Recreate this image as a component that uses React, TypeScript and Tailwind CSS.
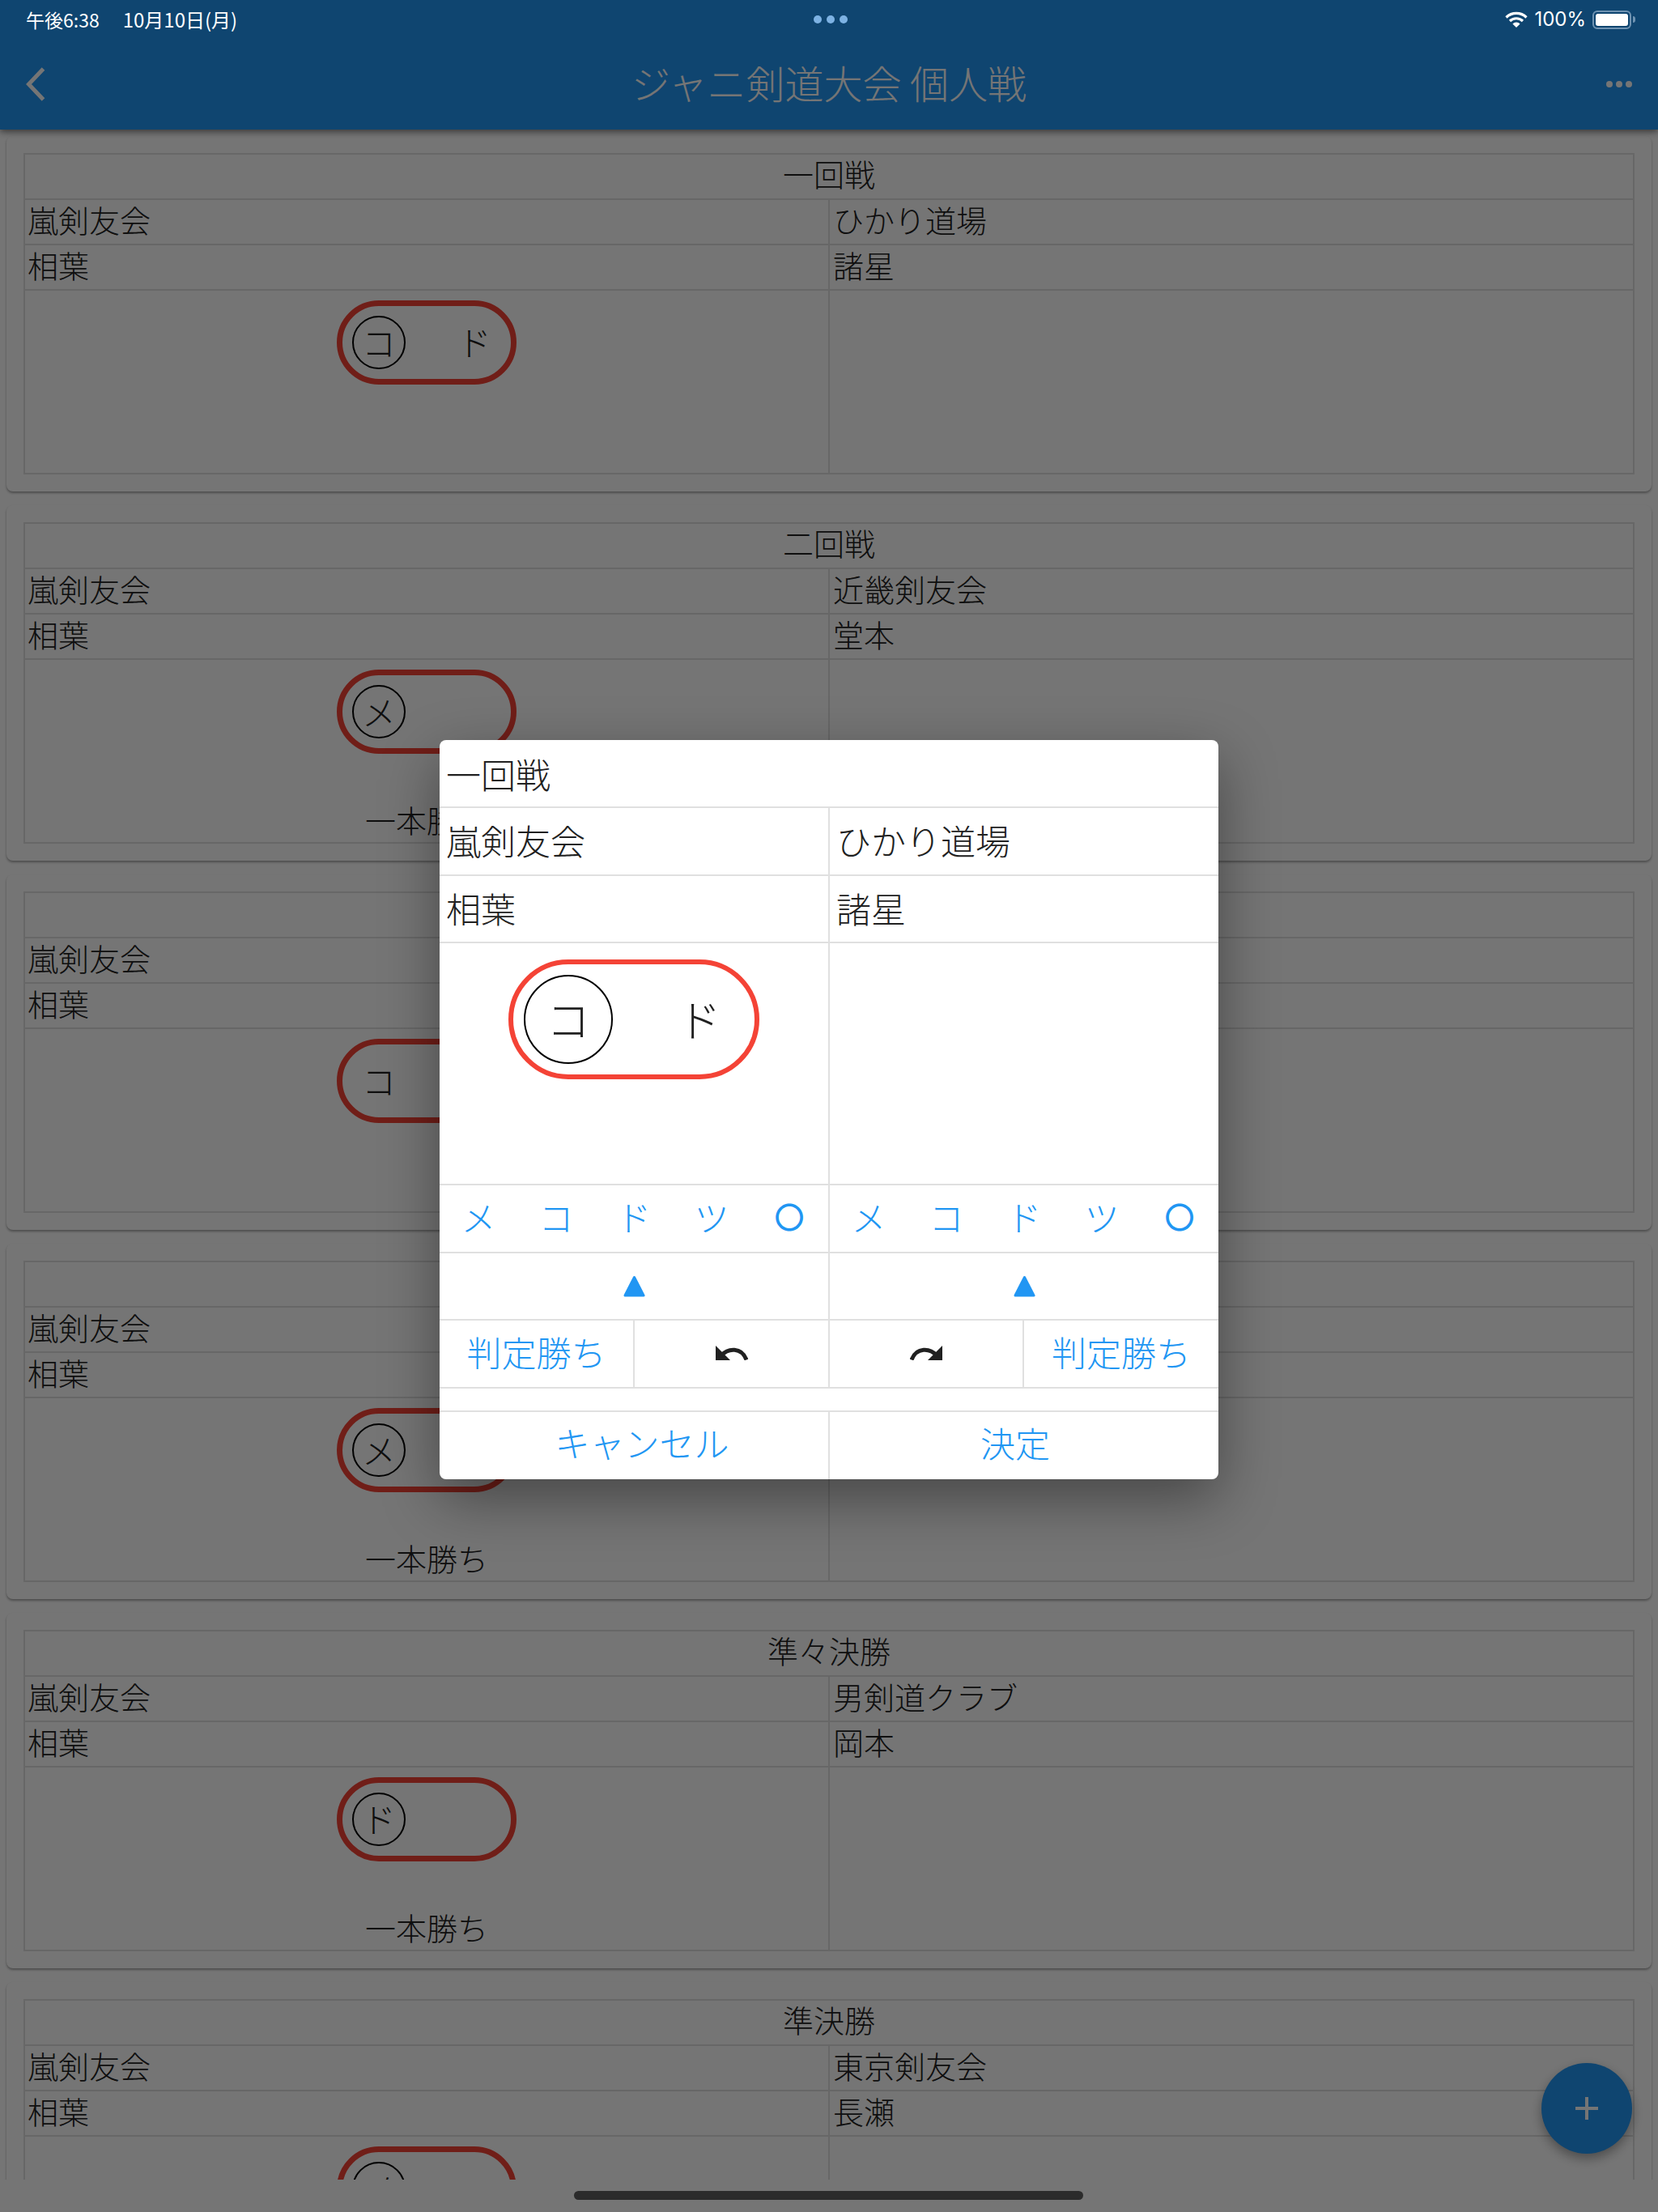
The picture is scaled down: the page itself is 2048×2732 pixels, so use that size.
const FONT = 'font-["Noto_Sans_CJK_JP","Liberation_Sans",sans-serif]';

interface Match {
    title: string;
    leftTeam: string;
    rightTeam: string;
    leftName: string;
    rightName: string;
    points: { label: string; circled: boolean }[];
    result?: string;
}

const matches: Match[] = [
    {
        title: '一回戦',
        leftTeam: '嵐剣友会',
        rightTeam: 'ひかり道場',
        leftName: '相葉',
        rightName: '諸星',
        points: [
            { label: 'コ', circled: true },
            { label: 'ド', circled: false },
        ],
    },
    {
        title: '二回戦',
        leftTeam: '嵐剣友会',
        rightTeam: '近畿剣友会',
        leftName: '相葉',
        rightName: '堂本',
        points: [{ label: 'メ', circled: true }],
        result: '一本勝ち',
    },
    {
        title: '三回戦',
        leftTeam: '嵐剣友会',
        rightTeam: '',
        leftName: '相葉',
        rightName: '',
        points: [{ label: 'コ', circled: false }],
    },
    {
        title: '四回戦',
        leftTeam: '嵐剣友会',
        rightTeam: '',
        leftName: '相葉',
        rightName: '',
        points: [{ label: 'メ', circled: true }],
        result: '一本勝ち',
    },
    {
        title: '準々決勝',
        leftTeam: '嵐剣友会',
        rightTeam: '男剣道クラブ',
        leftName: '相葉',
        rightName: '岡本',
        points: [{ label: 'ド', circled: true }],
        result: '一本勝ち',
    },
    {
        title: '準決勝',
        leftTeam: '嵐剣友会',
        rightTeam: '東京剣友会',
        leftName: '相葉',
        rightName: '長瀬',
        points: [{ label: 'メ', circled: true }],
        result: '一本勝ち',
    },
];

function SmallPill({ points }: { points: Match['points'] }) {
    return (
        <div className="flex w-[222px] h-[104px] shrink-0 items-center justify-between rounded-full border-[7px] border-[#f44336] pl-[12px] pr-[12px]">
            {points.map((point) => (
                <div
                    key={point.label}
                    className={`flex w-[66px] h-[66px] items-center justify-center rounded-full pb-[3px] text-[42px] ${
                        point.circled ? 'border-2 border-black' : ''
                    }`}>
                    {point.label}
                </div>
            ))}
        </div>
    );
}

function MatchCard({ match }: { match: Match }) {
    return (
        <div className="mx-2 mb-[17px] rounded-lg bg-white p-[21px] shadow-[0_2px_3px_rgba(0,0,0,0.35)]">
            <div className="border-2 border-[#e0e0e0] text-[38px] leading-[46px] text-[#212121]">
                <div className="flex h-[56px] items-center justify-center border-b-2 border-[#e0e0e0] pb-[8px]">
                    {match.title}
                </div>
                <div className="grid h-[56px] grid-cols-[994px_1fr] border-b-2 border-[#e0e0e0]">
                    <div className="flex items-center border-r-2 border-[#e0e0e0] pb-[7px] pl-[3px]">{match.leftTeam}</div>
                    <div className="flex items-center pb-[7px] pl-[4px]">{match.rightTeam}</div>
                </div>
                <div className="grid h-[56px] grid-cols-[994px_1fr] border-b-2 border-[#e0e0e0]">
                    <div className="flex items-center border-r-2 border-[#e0e0e0] pb-[7px] pl-[3px]">{match.leftName}</div>
                    <div className="flex items-center pb-[7px] pl-[4px]">{match.rightName}</div>
                </div>
                <div className="grid h-[225px] grid-cols-[994px_1fr]">
                    <div className="flex flex-col items-center justify-between border-r-2 border-[#e0e0e0] pt-3">
                        <SmallPill points={match.points} />
                        {match.result && <div className="pb-[5px]">{match.result}</div>}
                    </div>
                    <div />
                </div>
            </div>
        </div>
    );
}

function BackChevron() {
    return (
        <svg width="24" height="42" viewBox="0 0 24 42" fill="none" stroke="#ffffff" strokeWidth="5">
            <path d="M21.5 2 L3.5 21 L21.5 40" />
        </svg>
    );
}

function Wifi() {
    return (
        <svg width="28" height="20" viewBox="0 0 28 20" fill="none" stroke="#ffffff" strokeWidth="3.2">
            <path d="M1.5 7.5 A18 18 0 0 1 26.5 7.5" />
            <path d="M6 12 A11.5 11.5 0 0 1 22 12" />
            <path d="M14 20 L9.4 15.4 A6.5 6.5 0 0 1 18.6 15.4 Z" fill="#ffffff" stroke="none" />
        </svg>
    );
}

function Battery() {
    return (
        <div className="flex items-center gap-[2px]">
            <div className="flex h-[23px] w-[48px] items-center justify-center rounded-[6px] border-2 border-[#6f93b2]">
                <div className="h-[15px] w-[40px] rounded-[3px] bg-white" />
            </div>
            <div className="h-[8px] w-[3px] rounded-r-full bg-[#6f93b2]" />
        </div>
    );
}

function Triangle() {
    return (
        <svg width="27" height="27" viewBox="0 0 27 27" fill="#2196f3" stroke="#2196f3" strokeWidth="3" strokeLinejoin="round">
            <path d="M13.5 2.5 L25 25 H2 Z" />
        </svg>
    );
}

function Undo({ flip }: { flip?: boolean }) {
    return (
        <svg
            width="40"
            height="18"
            viewBox="0 0 40 18"
            className={flip ? '-scale-x-100' : ''}
            fill="#212121">
            <path d="M0 0 V18 H18 Z" />
            <path d="M7 12 C15 3 32 1 38 17.5" fill="none" stroke="#212121" strokeWidth="5" />
        </svg>
    );
}

function ScoreButtons() {
    return (
        <div className="grid grid-cols-5 items-center pb-[6px] text-center">
            <span>メ</span>
            <span>コ</span>
            <span>ド</span>
            <span>ツ</span>
            <span className="pt-[2px] text-[37px] font-medium">〇</span>
        </div>
    );
}

function ScoreDialog() {
    return (
        <div className="w-[962px] overflow-hidden rounded-lg bg-white text-[43px] text-[#212121] shadow-[0_24px_70px_rgba(0,0,0,0.4)]">
            <div className="flex h-[84px] items-center border-b-2 border-[#e0e0e0] pl-2">一回戦</div>
            <div className="grid h-[84px] grid-cols-[482px_1fr] border-b-2 border-[#e0e0e0]">
                <div className="flex items-center border-r-2 border-[#e0e0e0] pb-[3px] pl-2">嵐剣友会</div>
                <div className="flex items-center pb-[3px] pl-2">ひかり道場</div>
            </div>
            <div className="grid h-[83px] grid-cols-[482px_1fr] border-b-2 border-[#e0e0e0]">
                <div className="flex items-center border-r-2 border-[#e0e0e0] pb-[3px] pl-2">相葉</div>
                <div className="flex items-center pb-[3px] pl-2">諸星</div>
            </div>
            <div className="grid h-[299px] grid-cols-[482px_1fr] border-b-2 border-[#e0e0e0]">
                <div className="flex justify-center border-r-2 border-[#e0e0e0] pt-[20px]">
                    <div className="flex h-[148px] w-[310px] items-center justify-between rounded-full border-[6px] border-[#f44336] pl-[13px] pr-[13px] text-[54px]">
                        <div className="flex h-[110px] w-[110px] items-center justify-center rounded-full border-2 border-black pb-[4px]">
                            コ
                        </div>
                        <div className="flex h-[110px] w-[110px] items-center justify-center pb-[4px]">ド</div>
                    </div>
                </div>
                <div />
            </div>
            <div className="grid h-[84px] grid-cols-[482px_1fr] border-b-2 border-[#e0e0e0] text-[#2196f3]">
                <div className="grid items-center border-r-2 border-[#e0e0e0]">
                    <ScoreButtons />
                </div>
                <div className="grid items-center">
                    <ScoreButtons />
                </div>
            </div>
            <div className="grid h-[83px] grid-cols-[482px_1fr] border-b-2 border-[#e0e0e0]">
                <div className="flex items-center justify-center border-r-2 border-[#e0e0e0]">
                    <Triangle />
                </div>
                <div className="flex items-center justify-center">
                    <Triangle />
                </div>
            </div>
            <div className="grid h-[84px] grid-cols-[241px_241px_240px_1fr] border-b-2 border-[#e0e0e0]">
                <div className="flex items-center justify-center border-r-2 border-[#e0e0e0] pb-[6px] text-[#2196f3]">判定勝ち</div>
                <div className="flex items-center justify-center border-r-2 border-[#e0e0e0] pb-[2px]">
                    <Undo />
                </div>
                <div className="flex items-center justify-center border-r-2 border-[#e0e0e0] pb-[2px]">
                    <Undo flip />
                </div>
                <div className="flex items-center justify-center pb-[6px] text-[#2196f3]">判定勝ち</div>
            </div>
            <div className="h-[29px] border-b-2 border-[#e0e0e0]" />
            <div className="grid h-[83px] grid-cols-[482px_1fr] text-[#2196f3]">
                <div className="flex items-center justify-center border-r-2 border-[#e0e0e0] pb-[8px] pl-[20px]">キャンセル</div>
                <div className="flex items-center justify-center pb-[8px] pr-[22px]">決定</div>
            </div>
        </div>
    );
}

export default function App() {
    return (
        <div className={`relative flex h-[2732px] w-full flex-col overflow-hidden bg-white font-light ${FONT}`}>
            <header className="relative z-10 grid h-[160px] shrink-0 grid-cols-[1fr_auto_1fr] items-center bg-[#2196f3] pt-[48px] text-white shadow-[0_3px_8px_rgba(0,0,0,0.5)]">
                <div className="pl-[32px]">
                    <BackChevron />
                </div>
                <div className="mb-[6px] text-[48px]">ジャニ剣道大会 個人戦</div>
                <div className="flex justify-end gap-[4px] pr-[32px]">
                    <span className="h-2 w-2 rounded-full bg-white" />
                    <span className="h-2 w-2 rounded-full bg-white" />
                    <span className="h-2 w-2 rounded-full bg-white" />
                </div>
            </header>

            <div className="min-h-0 flex-1 overflow-hidden pt-2">
                {matches.map((match) => (
                    <MatchCard key={match.title} match={match} />
                ))}
            </div>
            <div className="h-[40px] shrink-0 bg-white" />

            <button className="absolute bottom-[72px] right-[32px] z-10 flex h-[112px] w-[112px] items-center justify-center rounded-full bg-[#2196f3] shadow-[0_6px_14px_rgba(0,0,0,0.35)]">
                <svg width="28" height="28" viewBox="0 0 28 28" stroke="#ffffff" strokeWidth="4">
                    <path d="M14 0 V28 M0 14 H28" />
                </svg>
            </button>

            {/* barrier + dialog */}
            <div className="absolute inset-0 z-20 flex items-center justify-center bg-black/54 pt-[9px]">
                <ScoreDialog />
            </div>

            {/* system chrome stays above the barrier */}
            <div className="absolute left-0 right-0 top-0 z-30 grid h-[48px] grid-cols-3 items-center pl-[32px] pr-[28px] text-white">
                <div className="flex items-center gap-[29px] font-normal">
                    <span className="text-[23px]">午後6:38</span>
                    <span className="text-[24px]">10月10日(月)</span>
                </div>
                <div className="flex justify-center gap-[6px]">
                    <span className="h-[10px] w-[10px] rounded-full bg-[#7db2e3]" />
                    <span className="h-[10px] w-[10px] rounded-full bg-[#7db2e3]" />
                    <span className="h-[10px] w-[10px] rounded-full bg-[#7db2e3]" />
                </div>
                <div className="flex items-center justify-end gap-[8px]">
                    <Wifi />
                    <span className="font-['Inter',sans-serif] text-[24px] font-normal">100%</span>
                    <Battery />
                </div>
            </div>
            <div className="absolute bottom-[15px] left-[709px] z-30 h-[11px] w-[629px] rounded-full bg-[#2b2b2b]" />
        </div>
    );
}
